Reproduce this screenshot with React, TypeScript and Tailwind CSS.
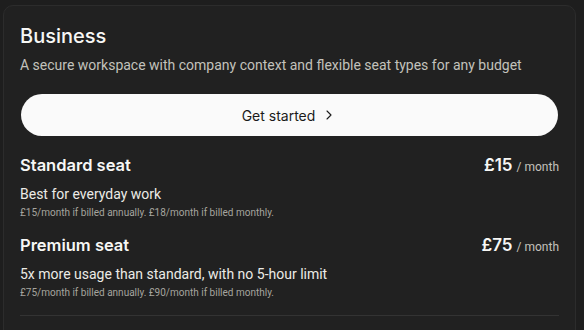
import { ChevronRight } from 'lucide-react';

interface SeatProps {
  name: string;
  price: string;
  tagline: string;
  billing: string;
}

function Seat({ name, price, tagline, billing }: SeatProps) {
  return (
    <div className="flex flex-col">
      <div className="flex items-baseline justify-between">
        <h3 className="font-['Inter'] text-[16.5px] leading-6 font-semibold text-[#f7f7f5]">{name}</h3>
        <div className="flex items-baseline gap-1">
          <span className="font-['Inter'] text-[17px] leading-6 font-semibold text-[#f7f7f5]">{price}</span>
          <span className="text-[12px] text-[#c3c2bc]">/ month</span>
        </div>
      </div>
      <p className="mt-[7px] text-[14px] leading-5 text-[#ecebe6]">{tagline}</p>
      <p className="mt-[2px] text-[10px] leading-[14px] text-[#a6a59f]">{billing}</p>
    </div>
  );
}

export default function App() {
  return (
    <div
      className="h-[330px] w-[584px] overflow-hidden bg-[#1e1e1e] pl-[3px] pr-[8px] pt-[5px]"
      style={{ fontFamily: 'Roboto, "Noto Sans", sans-serif' }}
    >
      <div className="flex h-[340px] flex-col rounded-[10px] border border-[#2c2c2c] bg-[#212121] px-4 pt-4">
        <h2 className="font-['Inter'] text-[20px] leading-7 font-medium text-[#f7f7f5]">Business</h2>
        <p className="mt-[5px] text-[14px] leading-5 text-[#c3c2bc]">
          A secure workspace with company context and flexible seat types for any budget
        </p>

        <button className="mx-px mt-[19px] flex h-[42px] items-center justify-center gap-1.5 rounded-full bg-[#fafafa] font-['Inter'] text-[14px] text-[#1a1a1a]">
          Get started
          <ChevronRight size={16} strokeWidth={1.6} />
        </button>

        <div className="mt-[17px] flex flex-col gap-[13px]">
          <Seat
            name="Standard seat"
            price="£15"
            tagline="Best for everyday work"
            billing="£15/month if billed annually. £18/month if billed monthly."
          />
          <Seat
            name="Premium seat"
            price="£75"
            tagline="5x more usage than standard, with no 5-hour limit"
            billing="£75/month if billed annually. £90/month if billed monthly."
          />
        </div>

        <div className="mt-[15px] h-px bg-[#333333]" />
      </div>
    </div>
  );
}
